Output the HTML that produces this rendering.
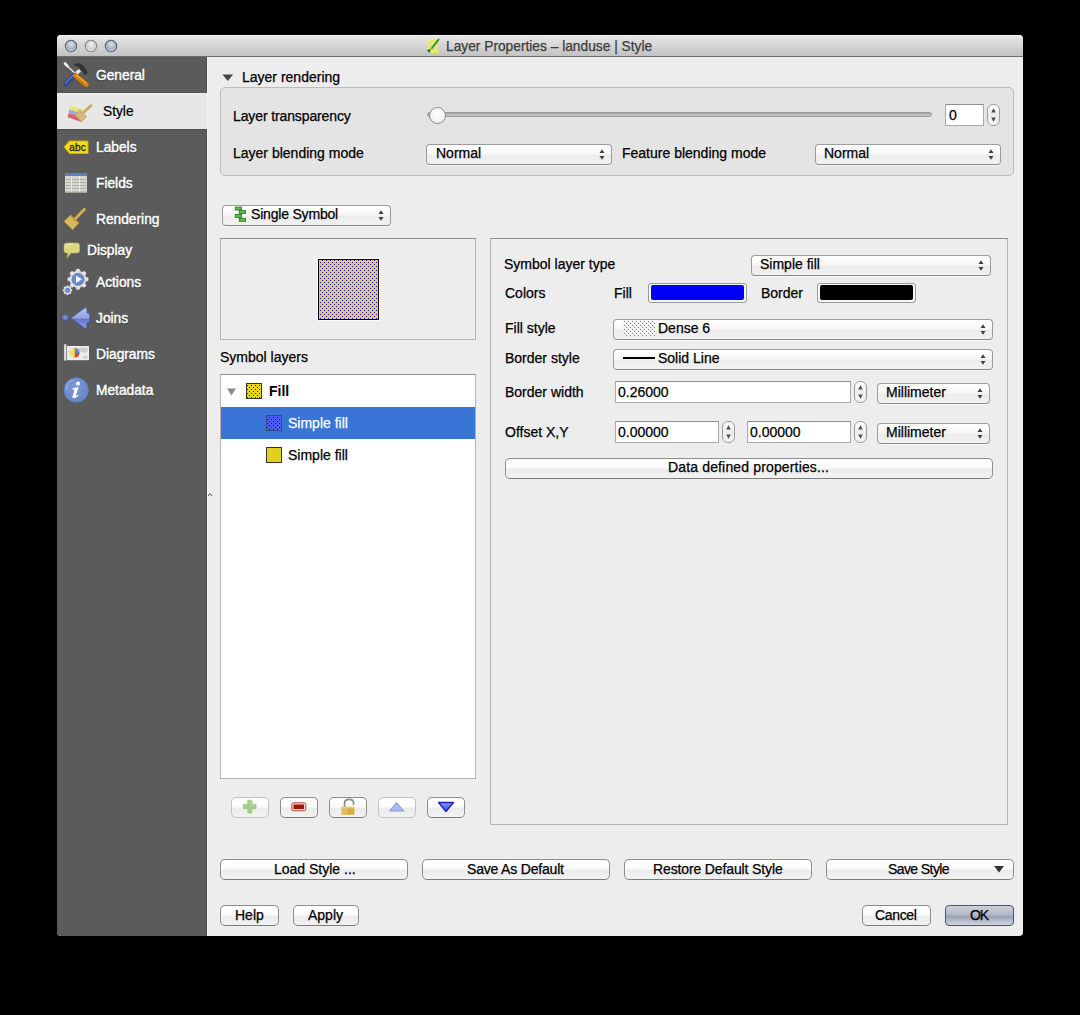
<!DOCTYPE html>
<html><head><meta charset="utf-8">
<style>
html,body{margin:0;padding:0}
body{width:1080px;height:1015px;background:#000;position:relative;overflow:hidden;font-family:"Liberation Sans",sans-serif}
.a{position:absolute}
.t{position:absolute;font-size:14px;line-height:16px;white-space:nowrap;color:#000;-webkit-text-stroke:0.25px currentColor}
.sb{position:absolute;font-size:13.75px;line-height:16px;white-space:nowrap;color:#fff;-webkit-text-stroke:0.45px currentColor;text-shadow:0 1px 1px rgba(0,0,0,.5)}
.cb{position:absolute;box-sizing:border-box;border:1px solid #9c9c9c;border-bottom-color:#8a8a8a;border-radius:4px;background:linear-gradient(#ffffff 0%,#f7f7f7 45%,#ececec 55%,#f1f1f1 100%);box-shadow:0 1px 0 rgba(255,255,255,.6)}
.ar{position:absolute;width:7px;height:12px}
.fd{position:absolute;box-sizing:border-box;background:#fff;border:1px solid #a9a9a9;border-top-color:#8e8e8e}
.sp{position:absolute;box-sizing:border-box;width:13px;height:22px;border:1px solid #9c9c9c;border-radius:6px;background:linear-gradient(#fff,#ececec 50%,#f4f4f4)}
.bt{position:absolute;box-sizing:border-box;border:1px solid #8e8e8e;border-bottom-color:#7c7c7c;border-radius:5px;background:linear-gradient(#ffffff 0%,#fbfbfb 45%,#ececec 55%,#f2f2f2 100%);text-align:center;font-size:14px;line-height:18px;color:#000;white-space:nowrap}
</style></head><body>
<!-- window -->
<div class="a" style="left:57px;top:35px;width:966px;height:901px;border-radius:4px;background:#ededed;overflow:hidden">
  <div class="a" style="left:0;top:0;width:966px;height:21px;background:linear-gradient(#e9e9e9,#d9d9d9 40%,#c2c2c2);border-top:0"></div>
  <div class="a" style="left:0;top:0;width:966px;height:1px;background:#f7f7f7"></div>
  <div class="a" style="left:0;top:21px;width:966px;height:1px;background:#6a6a6a"></div>
  <div class="a" style="left:0;top:22px;width:150px;height:879px;background:#5b5b5b"></div>
  <div class="a" style="left:0;top:58px;width:150px;height:36px;background:#e7e7e7"></div>
  <div class="a" style="left:149px;top:22px;width:1px;height:36px;background:#505050"></div>
  <div class="a" style="left:149px;top:94px;width:1px;height:807px;background:#505050"></div>
  <div class="a" style="left:0;top:57px;width:150px;height:1px;background:#505050"></div>
  <div class="a" style="left:0;top:58px;width:150px;height:1px;background:#f2f2f2"></div>
  <div class="a" style="left:0;top:94px;width:150px;height:1px;background:#505050"></div>
  <div class="a" style="left:150px;top:22px;width:1px;height:879px;background:#f4f4f4"></div>
</div>
<!-- title -->
<div class="t" style="left:446px;top:39px;font-size:13.75px;color:#3c3c3c">Layer Properties – landuse | Style</div>

<!-- sidebar labels -->
<div class="sb" style="left:96px;top:68px">General</div>
<div class="sb" style="left:103px;top:104px;color:#000;text-shadow:none;-webkit-text-stroke:0.2px #000">Style</div>
<div class="sb" style="left:96px;top:140px">Labels</div>
<div class="sb" style="left:96px;top:176px">Fields</div>
<div class="sb" style="left:96px;top:212px">Rendering</div>
<div class="sb" style="left:87px;top:243px">Display</div>
<div class="sb" style="left:96px;top:275px">Actions</div>
<div class="sb" style="left:96px;top:311px">Joins</div>
<div class="sb" style="left:96px;top:347px">Diagrams</div>
<div class="sb" style="left:96px;top:383px">Metadata</div>

<!-- Layer rendering group -->
<svg class="a" style="left:222px;top:74px" width="12" height="8"><path d="M0.5 0.5 L11 0.5 L5.75 7 Z" fill="#444"/></svg>
<div class="t" style="left:242px;top:69px">Layer rendering</div>
<div class="a" style="left:220px;top:87px;width:794px;height:89px;box-sizing:border-box;border:1px solid #bcbcbc;border-radius:5px;background:#e4e4e4"></div>
<div class="t" style="left:233px;top:108px;letter-spacing:-0.12px">Layer transparency</div>
<div class="t" style="left:233px;top:145px">Layer blending mode</div>
<div class="t" style="left:622px;top:145px">Feature blending mode</div>


<!-- slider -->
<div class="a" style="left:427px;top:112px;width:505px;height:5px;box-sizing:border-box;border-radius:3px;background:linear-gradient(#a8a8a8,#cccccc);border:1px solid #989898"></div>
<div class="a" style="left:429px;top:107px;width:17px;height:17px;box-sizing:border-box;border-radius:50%;border:1px solid #8a8a8a;background:radial-gradient(circle at 50% 40%,#ffffff 0%,#f6f6f6 50%,#e2e2e2 100%)"></div>
<!-- spin 0 -->
<div class="fd" style="left:945px;top:104px;width:39px;height:22px"></div>
<div class="t" style="left:949px;top:107px">0</div>
<div class="sp" style="left:987px;top:104px"></div>
<svg class="a" style="left:987px;top:104px" width="13" height="22"><path d="M4.2 8.5 L8.8 8.5 L6.5 4.2 Z M4.2 13.5 L8.8 13.5 L6.5 17.8 Z" fill="#4a4a4a"/></svg>
<!-- combos -->
<div class="cb" style="left:426px;top:144px;width:186px;height:21px"></div>
<div class="t" style="left:436px;top:145px">Normal</div>
<svg class="a" style="left:598px;top:147px" width="8" height="15"><path d="M1.5 6 L6.5 6 L4 2.2 Z M1.5 9 L6.5 9 L4 12.8 Z" fill="#404040"/></svg>
<div class="cb" style="left:815px;top:144px;width:186px;height:21px"></div>
<div class="t" style="left:824px;top:145px">Normal</div>
<svg class="a" style="left:987px;top:147px" width="8" height="15"><path d="M1.5 6 L6.5 6 L4 2.2 Z M1.5 9 L6.5 9 L4 12.8 Z" fill="#404040"/></svg>

<!-- Single symbol -->
<div class="cb" style="left:222px;top:205px;width:169px;height:21px"></div>
<svg class="a" style="left:234px;top:206px" width="12" height="16">
 <g fill="#5cbf4c" stroke="#2f7a25" stroke-width=".9">
  <rect x="1.3" y="1.1" width="6.2" height="2.9"/>
  <rect x="5.3" y="4.6" width="6.2" height="2.9"/>
  <rect x="1.3" y="8.5" width="6.2" height="2.9"/>
  <rect x="5.3" y="12.4" width="6.2" height="2.9"/>
 </g>
</svg>
<div class="t" style="left:251px;top:206px;letter-spacing:-0.19px">Single Symbol</div>
<svg class="a" style="left:377px;top:208px" width="8" height="15"><path d="M1.5 6 L6.5 6 L4 2.2 Z M1.5 9 L6.5 9 L4 12.8 Z" fill="#404040"/></svg>

<!-- preview -->
<div class="a" style="left:220px;top:238px;width:256px;height:102px;box-sizing:border-box;border:1px solid #b4b4b4;border-top-color:#8e8e8e;background:#ededed"></div>
<svg class="a" style="left:317px;top:258px" width="63" height="63">
 <defs><pattern id="d6" x="319" y="260" width="4" height="4" patternUnits="userSpaceOnUse">
  <rect width="4" height="4" fill="#e6da17"/><rect x="1" y="0" width="1" height="1" fill="#2400f0"/><rect x="3" y="2" width="1" height="1" fill="#2400f0"/></pattern>
 <pattern id="d6b" width="4" height="4" patternUnits="userSpaceOnUse">
  <rect width="4" height="4" fill="#e4d816"/><rect x="3" y="0" width="1" height="1" fill="#2400f0"/><rect x="1" y="2" width="1" height="1" fill="#2400f0"/></pattern></defs>
 <rect x="0" y="0" width="63" height="63" fill="#fafafa"/>
 <rect x="1" y="1" width="61" height="61" fill="#000"/>
 <rect x="2" y="2" width="59" height="59" fill="url(#d6b)"/>
</svg>
<div class="t" style="left:220px;top:349px">Symbol layers</div>

<!-- tree -->
<div class="a" style="left:220px;top:374px;width:256px;height:405px;box-sizing:border-box;border:1px solid #b4b4b4;border-top-color:#8e8e8e;background:#fff"></div>
<div class="a" style="left:221px;top:407px;width:254px;height:32px;background:#3875d7"></div>
<svg class="a" style="left:227px;top:388px" width="10" height="8"><path d="M0 0.5 L9 0.5 L4.5 7.5 Z" fill="#8c8c8c"/></svg>
<svg class="a" style="left:246px;top:383px" width="16" height="16"><rect x="0.5" y="0.5" width="15" height="15" fill="url(#d6b)" stroke="#333" stroke-width="1"/></svg>
<div class="t" style="left:269px;top:383px;font-weight:bold;-webkit-text-stroke:0">Fill</div>
<svg class="a" style="left:266px;top:415px" width="16" height="16"><defs><pattern id="bl" width="4" height="4" patternUnits="userSpaceOnUse"><rect width="4" height="4" fill="#4a5cf0"/><rect x="1" y="0" width="1" height="1" fill="#1a00c8"/><rect x="3" y="2" width="1" height="1" fill="#1a00c8"/></pattern></defs><rect x="0.5" y="0.5" width="15" height="15" fill="url(#bl)" stroke="#334a9a" stroke-width="1"/></svg>
<div class="t" style="left:288px;top:415px;color:#fff">Simple fill</div>
<svg class="a" style="left:266px;top:447px" width="16" height="16"><rect x="0.5" y="0.5" width="15" height="15" fill="#e0d21c" stroke="#333" stroke-width="1"/></svg>
<div class="t" style="left:288px;top:447px">Simple fill</div>


<!-- right panel -->
<div class="a" style="left:490px;top:238px;width:518px;height:587px;box-sizing:border-box;border:1px solid #b4b4b4;border-top-color:#8e8e8e"></div>
<div class="t" style="left:504px;top:256px">Symbol layer type</div>
<div class="cb" style="left:751px;top:255px;width:240px;height:21px"></div>
<div class="t" style="left:760px;top:256px">Simple fill</div>
<svg class="a" style="left:977px;top:258px" width="8" height="15"><path d="M1.5 6 L6.5 6 L4 2.2 Z M1.5 9 L6.5 9 L4 12.8 Z" fill="#404040"/></svg>
<div class="t" style="left:505px;top:285px">Colors</div>
<div class="t" style="left:614px;top:285px">Fill</div>
<div class="a" style="left:648px;top:283px;width:99px;height:20px;box-sizing:border-box;border:1px solid #9a9a9a;border-radius:3px;background:#f6f6f6"></div>
<div class="a" style="left:651px;top:285px;width:93px;height:15px;border-radius:2px;background:#0000f5"></div>
<div class="t" style="left:761px;top:285px">Border</div>
<div class="a" style="left:817px;top:283px;width:99px;height:20px;box-sizing:border-box;border:1px solid #9a9a9a;border-radius:3px;background:#f6f6f6"></div>
<div class="a" style="left:820px;top:285px;width:93px;height:15px;border-radius:2px;background:#000"></div>

<div class="t" style="left:505px;top:320px">Fill style</div>
<div class="cb" style="left:613px;top:319px;width:380px;height:21px"></div>
<svg class="a" style="left:623px;top:321px" width="32" height="16"><defs><pattern id="g6" width="4" height="4" patternUnits="userSpaceOnUse"><rect width="4" height="4" fill="#f2f2f2"/><rect x="1" y="0" width="1" height="1" fill="#777"/><rect x="3" y="2" width="1" height="1" fill="#777"/></pattern></defs><rect width="32" height="16" fill="url(#g6)"/></svg>
<div class="t" style="left:658px;top:320px">Dense 6</div>
<svg class="a" style="left:979px;top:322px" width="8" height="15"><path d="M1.5 6 L6.5 6 L4 2.2 Z M1.5 9 L6.5 9 L4 12.8 Z" fill="#404040"/></svg>
<div class="t" style="left:505px;top:350px">Border style</div>
<div class="cb" style="left:613px;top:349px;width:380px;height:21px"></div>
<div class="a" style="left:623px;top:357px;width:32px;height:2px;background:#000"></div>
<div class="t" style="left:658px;top:350px">Solid Line</div>
<svg class="a" style="left:979px;top:352px" width="8" height="15"><path d="M1.5 6 L6.5 6 L4 2.2 Z M1.5 9 L6.5 9 L4 12.8 Z" fill="#404040"/></svg>

<div class="t" style="left:505px;top:384px">Border width</div>
<div class="fd" style="left:615px;top:381px;width:236px;height:22px"></div>
<div class="t" style="left:618px;top:384px">0.26000</div>
<div class="sp" style="left:854px;top:381px"></div><svg class="a" style="left:854px;top:381px" width="13" height="22"><path d="M4.2 8.5 L8.8 8.5 L6.5 4.2 Z M4.2 13.5 L8.8 13.5 L6.5 17.8 Z" fill="#4a4a4a"/></svg>
<div class="cb" style="left:877px;top:383px;width:113px;height:21px"></div>
<div class="t" style="left:886px;top:384px">Millimeter</div>
<svg class="a" style="left:976px;top:386px" width="8" height="15"><path d="M1.5 6 L6.5 6 L4 2.2 Z M1.5 9 L6.5 9 L4 12.8 Z" fill="#404040"/></svg>

<div class="t" style="left:505px;top:424px">Offset X,Y</div>
<div class="fd" style="left:615px;top:421px;width:104px;height:22px"></div>
<div class="t" style="left:618px;top:424px">0.00000</div>
<div class="sp" style="left:722px;top:421px"></div><svg class="a" style="left:722px;top:421px" width="13" height="22"><path d="M4.2 8.5 L8.8 8.5 L6.5 4.2 Z M4.2 13.5 L8.8 13.5 L6.5 17.8 Z" fill="#4a4a4a"/></svg>
<div class="fd" style="left:747px;top:421px;width:104px;height:22px"></div>
<div class="t" style="left:750px;top:424px">0.00000</div>
<div class="sp" style="left:854px;top:421px"></div><svg class="a" style="left:854px;top:421px" width="13" height="22"><path d="M4.2 8.5 L8.8 8.5 L6.5 4.2 Z M4.2 13.5 L8.8 13.5 L6.5 17.8 Z" fill="#4a4a4a"/></svg>
<div class="cb" style="left:877px;top:423px;width:113px;height:21px"></div>
<div class="t" style="left:886px;top:424px">Millimeter</div>
<svg class="a" style="left:976px;top:426px" width="8" height="15"><path d="M1.5 6 L6.5 6 L4 2.2 Z M1.5 9 L6.5 9 L4 12.8 Z" fill="#404040"/></svg>

<div class="bt" style="left:505px;top:458px;width:488px;height:21px"></div>
<div class="t" style="left:668px;top:459px;letter-spacing:0.15px">Data defined properties...</div>

<!-- tool buttons under tree -->
<div class="bt" style="left:231px;top:797px;width:38px;height:21px;border-color:#c2c2c2"></div>
<div class="bt" style="left:280px;top:797px;width:38px;height:21px"></div>
<div class="bt" style="left:329px;top:797px;width:38px;height:21px"></div>
<div class="bt" style="left:378px;top:797px;width:38px;height:21px;border-color:#c2c2c2"></div>
<div class="bt" style="left:427px;top:797px;width:38px;height:21px"></div>

<!-- bottom buttons -->
<div class="bt" style="left:220px;top:859px;width:188px;height:21px"></div>
<div class="t" style="left:274px;top:861px">Load Style ...</div>
<div class="bt" style="left:422px;top:859px;width:188px;height:21px"></div>
<div class="t" style="left:467px;top:861px;letter-spacing:-0.19px">Save As Default</div>
<div class="bt" style="left:624px;top:859px;width:188px;height:21px"></div>
<div class="t" style="left:653px;top:861px;letter-spacing:-0.13px">Restore Default Style</div>
<div class="bt" style="left:826px;top:859px;width:188px;height:21px"></div>
<div class="t" style="left:888px;top:861px;letter-spacing:-0.59px">Save Style</div>
<svg class="a" style="left:994px;top:866px" width="10" height="7"><path d="M0 0 L10 0 L5 6.5 Z" fill="#333"/></svg>

<div class="bt" style="left:220px;top:905px;width:59px;height:21px"></div>
<div class="t" style="left:235px;top:907px">Help</div>
<div class="bt" style="left:293px;top:905px;width:66px;height:21px"></div>
<div class="t" style="left:308px;top:907px">Apply</div>
<div class="bt" style="left:862px;top:905px;width:69px;height:21px"></div>
<div class="t" style="left:875px;top:907px;letter-spacing:-0.33px">Cancel</div>
<div class="a" style="left:945px;top:905px;width:69px;height:21px;box-sizing:border-box;border:1px solid #4f5166;border-radius:4px;background:linear-gradient(#cdd0da 0%,#b4b9c7 45%,#9aa1b5 55%,#cfd5e0 100%)"></div>
<div class="t" style="left:970px;top:907px;letter-spacing:-1.2px">OK</div>


<!-- traffic lights -->
<svg class="a" style="left:63px;top:38px" width="56" height="16">
 <defs>
  <radialGradient id="tl" cx="50%" cy="35%" r="65%"><stop offset="0" stop-color="#dfe3ea"/><stop offset="0.6" stop-color="#a8b0bf"/><stop offset="1" stop-color="#c8ced8"/></radialGradient>
  <radialGradient id="tl2" cx="50%" cy="35%" r="65%"><stop offset="0" stop-color="#f4f4f4"/><stop offset="0.6" stop-color="#d0d0d0"/><stop offset="1" stop-color="#e4e4e4"/></radialGradient>
 </defs>
 <circle cx="8" cy="8" r="6.6" fill="#f2f2f2" opacity=".5"/>
 <circle cx="8" cy="8" r="5.7" fill="url(#tl)" stroke="#5d6370" stroke-width="1.1"/>
 <circle cx="28" cy="8" r="5.7" fill="url(#tl2)" stroke="#8a8a8a" stroke-width="1.1"/>
 <circle cx="48" cy="8" r="5.7" fill="url(#tl)" stroke="#5d6370" stroke-width="1.1"/>
</svg>
<!-- qgis icon -->
<svg class="a" style="left:426px;top:37px" width="15" height="17">
 <ellipse cx="6.8" cy="9.2" rx="4" ry="5.4" fill="none" stroke="#e4f050" stroke-width="2.8" transform="rotate(-8 6.8 9.2)"/>
 <path d="M8.8 13.6 L11.6 15.6" stroke="#e4f050" stroke-width="2.2" stroke-linecap="round"/>
 <path d="M13.4 1.2 Q14 2.5 12.4 4.5 L6 12.2 L4.6 11.4 L10.6 3.2 Q12 1.3 13.4 1.2 Z" fill="#3c9a1c"/>
 <path d="M4.8 11.8 L1 13.2 L3.6 15.8 Z" fill="#1e5a10"/>
</svg>

<!-- sidebar icons -->
<svg class="a" style="left:63px;top:62px" width="26" height="26">
 <path d="M2.2 2.2 L12 11.2" stroke="#e6e6e6" stroke-width="1.5" stroke-linecap="round"/>
 <path d="M2 1.5 L4.5 4" stroke="#ececec" stroke-width="2.6" stroke-linecap="round"/>
 <path d="M3 22 L11.5 13.2" stroke="#2d4890" stroke-width="4.6" stroke-linecap="round"/>
 <path d="M2.8 21 L11 12.6" stroke="#5f7cc4" stroke-width="1.3" stroke-linecap="round"/>
 <path d="M11 2.5 C13 0.8 17 0.6 20 3.5 C22 5.5 23.5 8 24.5 10 C24.8 11.5 23.5 13 21.6 12.8 C20 10.5 18.5 8 17.5 7.2 C16 5 14 3.8 11.3 3.5 Z" fill="#2f3336"/>
 <path d="M13.3 11.3 L17 8.3" stroke="#e8e8e0" stroke-width="3.4"/>
 <path d="M12.4 13.6 L23.4 22.8" stroke="#d97a06" stroke-width="4.6" stroke-linecap="round"/>
 <path d="M13.4 13 L23.6 21.6" stroke="#f2a820" stroke-width="1.4" stroke-linecap="round"/>
</svg>
<svg class="a" style="left:66px;top:103px" width="27" height="20">
 <path d="M4 2.3 L17.7 6.5 L17.5 11 L3.2 6.5 Z" fill="#e8e47c"/>
 <path d="M3.2 6.5 L17.5 11 L16 14 L2.5 10.3 Z" fill="#93ade2"/>
 <path d="M2.5 10.3 L16 14 L15.3 18.9 L1.7 14.2 Z" fill="#d9646f"/>
 <path d="M18.3 8.8 L25 2.6" stroke="#c9a96a" stroke-width="2.8" stroke-linecap="round"/>
 <path d="M8.8 11.8 L13.5 7 L20.6 13.3 L15.3 18.9 Z" fill="#d6bc80" stroke="#b39456" stroke-width=".7"/>
 <path d="M10.5 13.5 L15 9 M12.5 15.5 L17 11" stroke="#c2a466" stroke-width=".6"/>
</svg>
<svg class="a" style="left:63px;top:140px" width="27" height="15">
 <path d="M1 7 L6.5 1 L25 1 L25 13.5 L6.5 13.5 Z" fill="#f2dc14" stroke="#cbb000" stroke-width="1"/>
 <text x="6.3" y="10.6" font-family="Liberation Sans" font-size="10" fill="#2a2a2a" stroke="#2a2a2a" stroke-width=".35" letter-spacing=".2">abc</text>
</svg>
<svg class="a" style="left:64px;top:172px" width="24" height="21">
 <rect x="1" y="1" width="22" height="19.5" fill="#d6d5cc"/>
 <rect x="1" y="1" width="22" height="3" fill="#5f7dc2"/>
 <rect x="1" y="19.5" width="22" height="1" fill="#a8a8a0"/>
 <g stroke="#aeaea6" stroke-width="1">
  <path d="M2 7.5 H22 M2 10.5 H22 M2 13.5 H22 M2 16.5 H22"/>
 </g>
 <g stroke="#e8e8e0" stroke-width="1"><path d="M7.5 4 V19.5 M15.5 4 V19.5"/></g>
</svg>
<svg class="a" style="left:63px;top:207px" width="25" height="25">
 <path d="M12.8 11.3 L21.4 2.3" stroke="#d8b24e" stroke-width="2.7" stroke-linecap="round"/>
 <path d="M1.1 14.4 L7.4 8.1 L15.9 15.7 L9.6 22.9 Z" fill="#dcbc62" stroke="#b8923a" stroke-width=".6"/>
 <path d="M7.4 8.1 L15.9 15.7 L15.2 17.2 L6.5 9.3 Z" fill="#c9a040"/>
 <path d="M3.5 16.5 L9.5 10.5 M5.5 18.5 L11.5 12.5 M7.5 20.5 L13.5 14.5 M4 12.5 L11.5 19.5" stroke="#c8a650" stroke-width=".5"/>
</svg>
<svg class="a" style="left:63px;top:242px" width="18" height="18">
 <path d="M3.5 1 H14 Q16.5 1 16.5 3.5 V8.5 Q16.5 11 14 11 H8 L4 15.8 L5 11 H3.5 Q1 11 1 8.5 V3.5 Q1 1 3.5 1 Z" fill="#dcd67c" stroke="#c2b85a" stroke-width=".6"/>
 <path d="M2.5 6 Q2.5 2.5 6 2.3 L10 2.3" stroke="#f4f0c0" stroke-width="1" fill="none"/>
</svg>
<svg class="a" style="left:62px;top:266px" width="30" height="30">
 <g fill="#e6e6e6" stroke="#cfcfcf" stroke-width=".5"><circle cx="16" cy="13.3" r="8.3"/><rect x="14.20" y="3.10" width="3.6" height="4" rx="1" transform="rotate(0.0 16 13.3)"/><rect x="14.20" y="3.10" width="3.6" height="4" rx="1" transform="rotate(45.0 16 13.3)"/><rect x="14.20" y="3.10" width="3.6" height="4" rx="1" transform="rotate(90.0 16 13.3)"/><rect x="14.20" y="3.10" width="3.6" height="4" rx="1" transform="rotate(135.0 16 13.3)"/><rect x="14.20" y="3.10" width="3.6" height="4" rx="1" transform="rotate(180.0 16 13.3)"/><rect x="14.20" y="3.10" width="3.6" height="4" rx="1" transform="rotate(225.0 16 13.3)"/><rect x="14.20" y="3.10" width="3.6" height="4" rx="1" transform="rotate(270.0 16 13.3)"/><rect x="14.20" y="3.10" width="3.6" height="4" rx="1" transform="rotate(315.0 16 13.3)"/></g>
 <circle cx="16" cy="13.3" r="6.1" fill="#6b8bcb" stroke="#5473b8" stroke-width=".7"/>
 <path d="M14 9.6 L19.8 13.3 L14 17 Z" fill="#fff"/>
 <g fill="#e6e6e6" stroke="#cfcfcf" stroke-width=".4"><circle cx="5.5" cy="24.3" r="3.7"/><rect x="4.50" y="19.60" width="2" height="2" rx="1" transform="rotate(0.0 5.5 24.3)"/><rect x="4.50" y="19.60" width="2" height="2" rx="1" transform="rotate(45.0 5.5 24.3)"/><rect x="4.50" y="19.60" width="2" height="2" rx="1" transform="rotate(90.0 5.5 24.3)"/><rect x="4.50" y="19.60" width="2" height="2" rx="1" transform="rotate(135.0 5.5 24.3)"/><rect x="4.50" y="19.60" width="2" height="2" rx="1" transform="rotate(180.0 5.5 24.3)"/><rect x="4.50" y="19.60" width="2" height="2" rx="1" transform="rotate(225.0 5.5 24.3)"/><rect x="4.50" y="19.60" width="2" height="2" rx="1" transform="rotate(270.0 5.5 24.3)"/><rect x="4.50" y="19.60" width="2" height="2" rx="1" transform="rotate(315.0 5.5 24.3)"/></g>
 <circle cx="5.5" cy="24.3" r="2.6" fill="#6b8bcb"/>
</svg>
<svg class="a" style="left:61px;top:305px" width="31" height="26">
 <defs><linearGradient id="jg" x1="0" y1="0" x2="0" y2="1"><stop offset="0" stop-color="#b9c8ee"/><stop offset=".5" stop-color="#8ea2de"/><stop offset=".55" stop-color="#6479c8"/><stop offset="1" stop-color="#8fa4e8"/></linearGradient>
 <radialGradient id="jc" cx="50%" cy="40%" r="60%"><stop offset="0" stop-color="#8aa0dc"/><stop offset="1" stop-color="#3e56a8"/></radialGradient></defs>
 <circle cx="4.3" cy="13" r="3.4" fill="url(#jc)"/>
 <path d="M9.7 13 L25.6 1.6 L26.3 8 L28.8 8.7 L28.8 17.2 L26 18 L25.6 24.7 Z" fill="url(#jg)" stroke="#3f4f98" stroke-width=".8" stroke-linejoin="round"/>
</svg>
<svg class="a" style="left:63px;top:343px" width="27" height="19">
 <rect x="1.1" y="1.4" width="2" height="16" fill="#e6e6e6" stroke="#c8c8c8" stroke-width=".4"/>
 <rect x="3.9" y="3" width="22.1" height="14.2" fill="#ececea"/>
 <path d="M15 5 Q19 4 25 5.5 L24 9 Q20 10.5 17 8.5 Z M20 13 Q23 12 25 13 L24 15.5 Q21 16 20 14.5 Z M5 8 Q7 6.5 8 9 L6.5 12 Z" fill="#cfcfcd"/>
 <circle cx="11.8" cy="9.9" r="4.7" fill="#dc4030"/>
 <path d="M11.8 9.9 L11.8 5.2 A4.7 4.7 0 0 1 16.5 9.9 Z" fill="#6486d2"/>
 <path d="M11.8 9.9 L11.8 5.2 A4.7 4.7 0 0 0 11.8 14.6 Z" fill="#f2e24a"/>
 <path d="M10 6 A4 4 0 0 0 10 13.8" stroke="#fff8b0" stroke-width=".7" fill="none"/>
</svg>
<svg class="a" style="left:63px;top:377px" width="26" height="26">
 <defs><radialGradient id="mg" cx="45%" cy="35%" r="70%"><stop offset="0" stop-color="#7d9ad8"/><stop offset="1" stop-color="#6384c8"/></radialGradient></defs>
 <circle cx="13.2" cy="13" r="12.3" fill="url(#mg)" stroke="#5a78bc" stroke-width=".6"/>
 <path d="M3.5 13 Q3.5 5 10 3" stroke="#a9bde8" stroke-width="1" fill="none"/>
 <circle cx="15" cy="6.6" r="2" fill="#fff"/>
 <path d="M9.6 11.2 L15.6 10 L13 18.2 Q12.8 19 13.8 18.6 L15.2 17.4 L15.6 18.6 Q13 21.5 10.6 21.2 Q9 20.8 9.6 19 L11.6 12.6 L9.4 12.8 Z" fill="#fff"/>
</svg>

<!-- tool button icons -->
<svg class="a" style="left:242px;top:799px" width="17" height="16">
 <path d="M5.3 1 H10.3 V5.2 H14.6 V10.2 H10.3 V14.6 H5.3 V10.2 H1 V5.2 H5.3 Z" fill="#e4f0da" stroke="#e8f2e0" stroke-width="1.6" stroke-linejoin="round"/>
 <path d="M5.8 1.6 H9.8 V5.7 H14 V9.7 H9.8 V14 H5.8 V9.7 H1.6 V5.7 H5.8 Z" fill="#a6cb8c" stroke="#8fbd74" stroke-width=".6" stroke-linejoin="round"/>
 <path d="M6.8 2.8 H8.8 V6.8 H12.8" stroke="#c2dcb0" stroke-width=".8" fill="none"/>
</svg>
<svg class="a" style="left:291px;top:802px" width="16" height="10">
 <rect x="0.8" y="0.8" width="14" height="8" rx="1.5" fill="#f0d8d0" stroke="#b84a3a" stroke-width="1"/>
 <rect x="2.5" y="2.5" width="10.5" height="4.5" fill="#9a1808"/>
</svg>
<svg class="a" style="left:340px;top:797px" width="16" height="19">
 <path d="M4.6 10 V6 Q4.6 2.4 9.2 2.4 Q13.6 2.4 13.6 6 V8" stroke="#8c8c8c" stroke-width="1.7" fill="none"/>
 <rect x="1.6" y="9.8" width="12.8" height="8" rx="1" fill="#d6ae48"/>
 <rect x="1.6" y="9.8" width="6" height="8" rx="1" fill="#e0bd5e"/>
 <rect x="1.6" y="9.8" width="12.8" height="1.5" fill="#e8cc78"/>
</svg>
<svg class="a" style="left:388px;top:801px" width="18" height="12">
 <path d="M1.5 10 L8.5 1.5 L16 10 Z" fill="#a9b9f2" stroke="#8b94d8" stroke-width="1" stroke-linejoin="round"/>
</svg>
<svg class="a" style="left:437px;top:801px" width="18" height="12">
 <defs><linearGradient id="dg" x1="0" y1="0" x2="0" y2="1"><stop offset="0" stop-color="#7f9cff"/><stop offset="1" stop-color="#3050f0"/></linearGradient></defs>
 <path d="M1.5 1.5 L16.5 1.5 L9 10.5 Z" fill="url(#dg)" stroke="#2020a8" stroke-width="1.3" stroke-linejoin="round"/>
</svg>

<!-- splitter handle -->
<svg class="a" style="left:207px;top:492px" width="6" height="6"><path d="M1 4 L3 1.5 L5 4" stroke="#555" stroke-width="1" fill="none"/></svg>

</body></html>
